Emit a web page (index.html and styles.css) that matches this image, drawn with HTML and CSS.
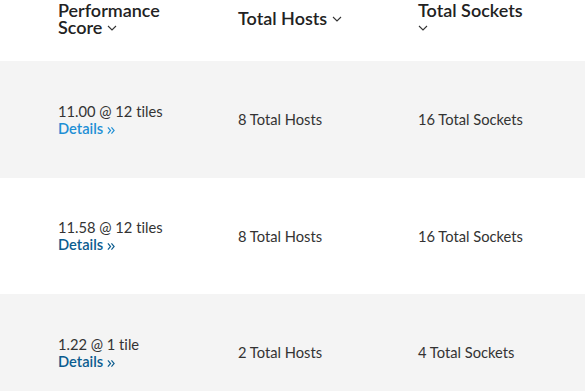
FILE: index.html
```html
<!DOCTYPE html>
<html lang="en">
<head>
<meta charset="utf-8">
<title>Performance</title>
<link rel="stylesheet" href="styles.css">
</head>
<body>
<div class="table">
  <div class="head">
    <div class="hcell"><span class="hlabel">Performance Score <svg class="chev" viewBox="0 0 10 6"><path d="M1 1 L5 5 L9 1"/></svg></span></div>
    <div class="hcell"><span class="hlabel">Total Hosts <svg class="chev" viewBox="0 0 10 6"><path d="M1 1 L5 5 L9 1"/></svg></span></div>
    <div class="hcell"><span class="hlabel">Total Sockets <svg class="chev" viewBox="0 0 10 6"><path d="M1 1 L5 5 L9 1"/></svg></span></div>
  </div>
  <div class="row shaded">
    <div class="cell"><div>11.00 @ 12 tiles</div><a class="details active" href="#">Details <svg class="dchev" viewBox="0 0 9 9"><path d="M1 1 L4 4.5 L1 8 M5 1 L8 4.5 L5 8"/></svg></a></div>
    <div class="cell">8 Total Hosts</div>
    <div class="cell">16 Total Sockets</div>
  </div>
  <div class="row">
    <div class="cell"><div>11.58 @ 12 tiles</div><a class="details" href="#">Details <svg class="dchev" viewBox="0 0 9 9"><path d="M1 1 L4 4.5 L1 8 M5 1 L8 4.5 L5 8"/></svg></a></div>
    <div class="cell">8 Total Hosts</div>
    <div class="cell">16 Total Sockets</div>
  </div>
  <div class="row shaded">
    <div class="cell"><div>1.22 @ 1 tile</div><a class="details" href="#">Details <svg class="dchev" viewBox="0 0 9 9"><path d="M1 1 L4 4.5 L1 8 M5 1 L8 4.5 L5 8"/></svg></a></div>
    <div class="cell">2 Total Hosts</div>
    <div class="cell">4 Total Sockets</div>
  </div>
</div>
</body>
</html>
```
FILE: styles.css
```css
html, body {
  margin: 0;
  padding: 0;
  background: #ffffff;
  overflow: hidden;
}
body {
  font-family: Lato, "Open Sans", sans-serif;
  font-variant-ligatures: none;
  color: #333333;
}
.table {
  width: 585px;
}
.head {
  display: grid;
  grid-template-columns: 180px 180px 1fr;
  padding-left: 58px;
  height: 61px;
  box-sizing: border-box;
  padding-bottom: 24px;
  align-items: center;
}
.hcell {
  width: 110px;
  font-size: 18px;
  line-height: 17px;
  font-weight: 600;
  color: #222222;
}
.chev {
  width: 10px;
  height: 6px;
  fill: none;
  stroke: #333;
  stroke-width: 1.1;
  vertical-align: 3px;
}
.row {
  display: grid;
  grid-template-columns: 180px 180px 1fr;
  padding-left: 58px;
  height: 116.5px;
  align-items: center;
  font-size: 14.7px;
  line-height: 17px;
}
.cell {
  padding-top: 1px;
}
.shaded {
  background: #f4f4f4;
}
.details {
  display: inline-block;
  color: #0b5c8f;
  text-decoration: none;
  font-weight: 600;
}
.details.active {
  color: #1e8fd5;
}
.dchev {
  width: 8px;
  height: 9px;
  fill: none;
  stroke: currentColor;
  stroke-width: 1.3;
  vertical-align: -1px;
}
```
